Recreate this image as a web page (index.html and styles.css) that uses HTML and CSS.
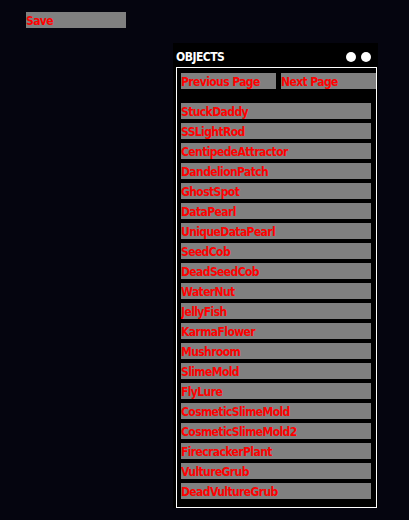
FILE: index.html
```html
<!DOCTYPE html>
<html>
<head>
<meta charset="utf-8">
<link rel="stylesheet" href="styles.css">
</head>
<body>
<div class="save-btn">Save</div>
<div class="panel">
  <div class="panel-header">
    <span class="panel-title">OBJECTS</span>
    <div class="dots"><span class="dot"></span><span class="dot"></span></div>
  </div>
  <div class="panel-body">
    <div class="pager">
      <div class="btn pager-btn">Previous Page</div>
      <div class="btn pager-btn">Next Page</div>
    </div>
    <div class="list">
      <div class="btn item">StuckDaddy</div>
      <div class="btn item">SSLightRod</div>
      <div class="btn item">CentipedeAttractor</div>
      <div class="btn item">DandelionPatch</div>
      <div class="btn item">GhostSpot</div>
      <div class="btn item">DataPearl</div>
      <div class="btn item">UniqueDataPearl</div>
      <div class="btn item">SeedCob</div>
      <div class="btn item">DeadSeedCob</div>
      <div class="btn item">WaterNut</div>
      <div class="btn item">JellyFish</div>
      <div class="btn item">KarmaFlower</div>
      <div class="btn item">Mushroom</div>
      <div class="btn item">SlimeMold</div>
      <div class="btn item">FlyLure</div>
      <div class="btn item">CosmeticSlimeMold</div>
      <div class="btn item">CosmeticSlimeMold2</div>
      <div class="btn item">FirecrackerPlant</div>
      <div class="btn item">VultureGrub</div>
      <div class="btn item">DeadVultureGrub</div>
    </div>
  </div>
</div>
</body>
</html>
```
FILE: styles.css
```css
html, body {
  margin: 0;
  padding: 0;
  background: #05050f;
}
body {
  width: 409px;
  height: 520px;
  overflow: hidden;
  font-family: "DejaVu Sans Condensed", "DejaVu Sans", sans-serif;
  font-stretch: condensed;
  font-weight: bold;
  font-size: 12px;
  letter-spacing: -0.6px;
  padding-top: 12px;
  box-sizing: border-box;
}
.btn, .save-btn {
  background: #808080;
  color: #ff0000;
  height: 16px;
  line-height: 14px;
  padding-top: 2px;
  box-sizing: border-box;
  white-space: nowrap;
  overflow: hidden;
}
.save-btn {
  width: 100px;
  margin-left: 26px;
}
.panel {
  margin-top: 15px;
  margin-left: 173px;
  width: 205px;
  background: #000000;
}
.panel-header {
  height: 24px;
  display: flex;
  align-items: center;
  justify-content: space-between;
  padding: 3px 7px 0 3px;
  box-sizing: border-box;
}
.panel-title {
  color: #ffffff;
  font-size: 12px;
  letter-spacing: -0.5px;
}
.dots {
  display: flex;
  gap: 5px;
}
.dot {
  width: 10px;
  height: 10px;
  border-radius: 50%;
  background: #ffffff;
}
.panel-body {
  margin-left: 3px;
  width: 201px;
  height: 441px;
  border: 1px solid #ffffff;
  box-sizing: border-box;
  padding: 5px 0 0 4px;
}
.pager {
  display: flex;
  gap: 5px;
  position: relative;
  z-index: 1;
}
.pager-btn {
  width: 95px;
}
.list {
  margin-top: 14px;
  display: flex;
  flex-direction: column;
  gap: 4px;
}
.item {
  width: 190px;
}
```
